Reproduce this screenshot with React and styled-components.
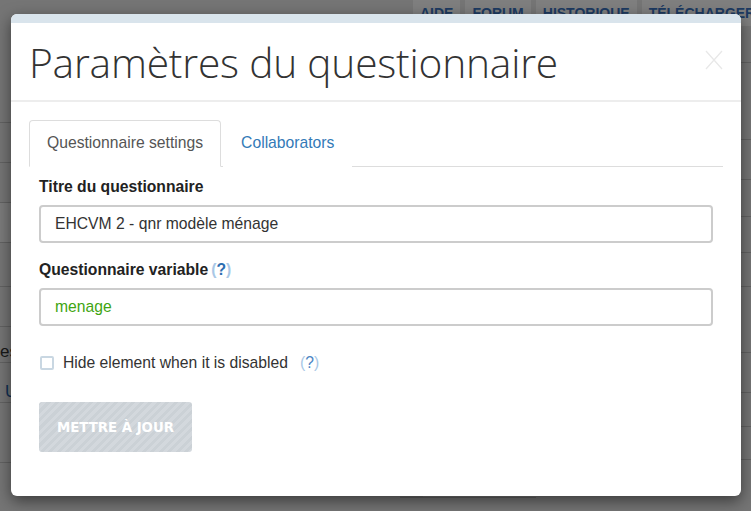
import React from 'react'
import styled, { createGlobalStyle } from 'styled-components'

const GlobalStyle = createGlobalStyle`
  html, body { margin: 0; padding: 0; }
  body {
    width: 751px;
    height: 511px;
    overflow: hidden;
    font-family: 'Liberation Sans', Arial, sans-serif;
  }
  * { box-sizing: border-box; }
`

const Page = styled.div`
  position: relative;
  width: 751px;
  height: 511px;
  overflow: hidden;
  background: #eaeaea;
`

const TopNav = styled.div`
  display: flex;
  gap: 5px;
  height: 40px;
  padding-left: 413px;
  white-space: nowrap;
  overflow: hidden;
`

const NavItem = styled.div`
  flex: none;
  background: #fff;
  color: #3b75c4;
  font-weight: 700;
  font-size: 14px;
  padding: 5px 7px 0;
  height: 26px;
`

const BgGrid = styled.div`
  display: grid;
  grid-template-columns: 400px 23px 113px 1fr;
`

const BgCol = styled.div`
  display: flex;
  flex-direction: column;
  background: ${(p) => p.bg || 'transparent'};
`

const BgRow = styled.div`
  height: ${(p) => p.h}px;
  border-bottom: 1px solid #c4c4c4;
  background: ${(p) => p.bg || 'transparent'};
  color: ${(p) => p.color || '#333'};
  font-size: 17px;
  display: flex;
  align-items: flex-end;
  padding-left: ${(p) => p.pl || 0}px;
`

const Overlay = styled.div`
  position: absolute;
  inset: 0;
  background: rgba(0, 0, 0, 0.5);
  padding: 14px 10px 0 11px;
`

const Modal = styled.div`
  width: 730px;
  height: 482px;
  background: #fff;
  border-radius: 6px;
  overflow: hidden;
  box-shadow: 0 5px 15px rgba(0, 0, 0, 0.5);
  display: flex;
  flex-direction: column;
`

const TopStrip = styled.div`
  height: 9px;
  background: #d9e4ec;
`

const Header = styled.div`
  display: flex;
  align-items: center;
  justify-content: space-between;
  height: 79px;
  padding: 0 18px 0 18px;
  border-bottom: 2px solid #ededed;
`

const Title = styled.h1`
  margin: 0;
  font-family: 'Open Sans', sans-serif;
  font-weight: 300;
  font-size: 40.7px;
  color: #333;
  letter-spacing: -0.2px;
`

const Close = styled.svg`
  width: 18px;
  height: 20px;
  margin-top: -4px;
`

const Body = styled.div`
  padding: 18px 18px 0;
`

const Tabs = styled.div`
  display: flex;
  border-bottom: 1px solid #ddd;
`

const Tab = styled.div`
  font-size: 15.7px;
  line-height: 20px;
  padding: 12px 17px 13px;
  margin-right: 2px;
  margin-bottom: -1px;
  border: 1px solid ${(p) => (p.active ? '#ddd' : 'transparent')};
  border-bottom-color: ${(p) => (p.active ? '#fff' : 'transparent')};
  border-radius: 4px 4px 0 0;
  background: #fff;
  color: ${(p) => (p.active ? '#555' : '#337ab7')};
`

const Form = styled.div`
  padding: 10px 10px 0;
  display: flex;
  flex-direction: column;
`

const Label = styled.div`
  font-size: 15.7px;
  line-height: 20px;
  font-weight: 700;
  color: #222;
  margin-bottom: 8px;
`

const Help = styled.span`
  color: #a9c8e6;
  font-weight: ${(p) => (p.bold ? 700 : 400)};
  margin-left: ${(p) => p.ml || 3}px;
  b {
    color: ${(p) => (p.bold ? '#2c6db0' : '#4d86c4')};
    font-weight: ${(p) => (p.bold ? 700 : 400)};
  }
`

const Input = styled.div`
  height: 38px;
  border: 2px solid #cccccc;
  border-radius: 4px;
  padding: 0 14px;
  display: flex;
  align-items: center;
  font-size: 15.7px;
  color: ${(p) => p.color || '#333'};
  margin-bottom: 17px;
`

const CheckRow = styled.label`
  display: flex;
  align-items: center;
  margin-top: 11px;
  font-size: 15.7px;
  color: #333;
`

const Box = styled.span`
  width: 14px;
  height: 14px;
  border: 2px solid #c9d7e2;
  border-radius: 2px;
  margin: 0 9px 0 1px;
`

const Submit = styled.button`
  margin-top: 30px;
  width: 153px;
  height: 50px;
  border: none;
  border-radius: 3px;
  background: repeating-linear-gradient(
    -45deg,
    #d3d8dd 0px,
    #d3d8dd 3px,
    #cbd1d6 3px,
    #cbd1d6 6px
  );
  color: #fff;
  font-family: 'DejaVu Sans', Verdana, sans-serif;
  font-weight: 700;
  font-size: 13.3px;
  letter-spacing: 0;
  padding: 0;
`

export default function App() {
  return (
    <>
      <GlobalStyle />
      <Page>
        <TopNav>
          <NavItem>AIDE</NavItem>
          <NavItem>FORUM</NavItem>
          <NavItem>HISTORIQUE</NavItem>
          <NavItem>TÉLÉCHARGER</NavItem>
        </TopNav>
        <BgGrid>
          <BgCol>
            <BgRow h={83} />
            <BgRow h={40} />
            <BgRow h={40} />
            <BgRow h={40} bg="#f6f6f6" />
            <BgRow h={44} />
            <BgRow h={40} />
            <BgRow h={36}>es</BgRow>
            <BgRow h={40} pl={5} color="#1f5fa8">U</BgRow>
            <BgRow h={60} />
          </BgCol>
          <BgCol bg="#d8d8d8">
            <BgRow h={458} />
          </BgCol>
          <BgCol>
            <BgRow h={458} pl={20} color="#2e7d0f">
              3
            </BgRow>
          </BgCol>
          <BgCol>
            <BgRow h={23} />
            <BgRow h={77} />
            <BgRow h={40} />
            <BgRow h={37} />
            <BgRow h={36} />
            <BgRow h={34} />
            <BgRow h={66} />
            <BgRow h={40} />
            <BgRow h={34} />
            <BgRow h={33} pl={17}>Langue3</BgRow>
          </BgCol>
        </BgGrid>
        <Overlay>
          <Modal>
            <TopStrip />
            <Header>
              <Title>Paramètres du questionnaire</Title>
              <Close viewBox="0 0 18 20">
                <path d="M1 1 L17 19 M17 1 L1 19" stroke="#e8e8e8" strokeWidth="1.3" fill="none" />
              </Close>
            </Header>
            <Body>
              <Tabs>
                <Tab active>Questionnaire settings</Tab>
                <Tab>Collaborators</Tab>
              </Tabs>
              <Form>
                <Label>Titre du questionnaire</Label>
                <Input>EHCVM 2 - qnr modèle ménage</Input>
                <Label>
                  Questionnaire variable
                  <Help bold>
                    (<b>?</b>)
                  </Help>
                </Label>
                <Input color="#3fa512">menage</Input>
                <CheckRow>
                  <Box />
                  Hide element when it is disabled
                  <Help ml={12}>
                    (<b>?</b>)
                  </Help>
                </CheckRow>
                <Submit disabled>METTRE À JOUR</Submit>
              </Form>
            </Body>
          </Modal>
        </Overlay>
      </Page>
    </>
  )
}
